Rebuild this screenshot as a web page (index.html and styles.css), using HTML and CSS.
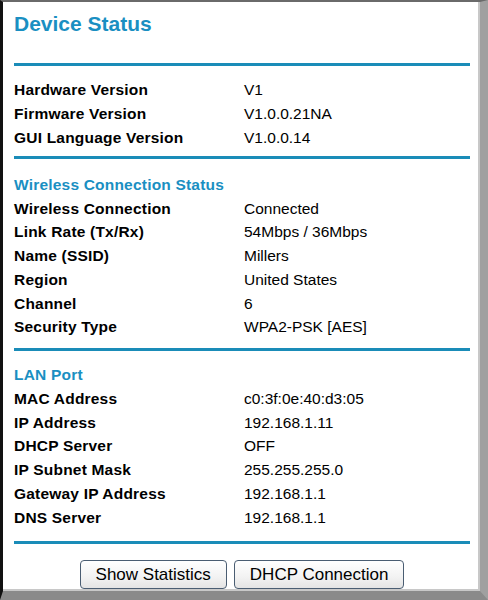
FILE: index.html
```html
<!DOCTYPE html>
<html>
<head>
<meta charset="utf-8">
<link rel="stylesheet" href="styles.css">
</head>
<body>
<div class="frame">
  <h1 class="title">Device Status</h1>
  <div class="rule rule-1"></div>
  <div class="section">
    <div class="row"><span class="label">Hardware Version</span><span class="value">V1</span></div>
    <div class="row"><span class="label">Firmware Version</span><span class="value">V1.0.0.21NA</span></div>
    <div class="row"><span class="label">GUI Language Version</span><span class="value">V1.0.0.14</span></div>
  </div>
  <div class="rule rule-2"></div>
  <div class="section">
    <div class="row heading">Wireless Connection Status</div>
    <div class="row"><span class="label">Wireless Connection</span><span class="value">Connected</span></div>
    <div class="row"><span class="label">Link Rate (Tx/Rx)</span><span class="value">54Mbps / 36Mbps</span></div>
    <div class="row"><span class="label">Name (SSID)</span><span class="value">Millers</span></div>
    <div class="row"><span class="label">Region</span><span class="value">United States</span></div>
    <div class="row"><span class="label">Channel</span><span class="value">6</span></div>
    <div class="row"><span class="label">Security Type</span><span class="value">WPA2-PSK [AES]</span></div>
  </div>
  <div class="rule rule-3"></div>
  <div class="section">
    <div class="row heading">LAN Port</div>
    <div class="row"><span class="label">MAC Address</span><span class="value">c0:3f:0e:40:d3:05</span></div>
    <div class="row"><span class="label">IP Address</span><span class="value">192.168.1.11</span></div>
    <div class="row"><span class="label">DHCP Server</span><span class="value">OFF</span></div>
    <div class="row"><span class="label">IP Subnet Mask</span><span class="value">255.255.255.0</span></div>
    <div class="row"><span class="label">Gateway IP Address</span><span class="value">192.168.1.1</span></div>
    <div class="row"><span class="label">DNS Server</span><span class="value">192.168.1.1</span></div>
  </div>
  <div class="rule rule-4"></div>
  <div class="buttons">
    <button class="btn" type="button">Show Statistics</button>
    <button class="btn" type="button">DHCP Connection</button>
  </div>
</div>
</body>
</html>
```
FILE: styles.css
```css
html, body {
  margin: 0;
  padding: 0;
  background: #fff;
}
.frame {
  width: 488px;
  height: 600px;
  box-sizing: border-box;
  border-left: 3px solid #111;
  border-top: 2px solid #6a6a6a;
  border-right: 8px solid #a0a0a0;
  border-bottom: 9px solid #8a8a8a;
  box-shadow: inset -2px 0 0 #c8c8c8, inset 0 -2px 0 #c8c8c8;
  padding: 10px 10px 0 11px;
  display: flex;
  flex-direction: column;
  font-family: "Liberation Sans", Arial, sans-serif;
  color: #000;
}
.title {
  margin: 0;
  font-size: 21px;
  line-height: 24px;
  font-weight: bold;
  color: #1a8fc2;
}
.rule {
  height: 3px;
  background: #1a8cb8;
  flex: none;
}
.rule-1 { margin: 26.5px 0 12.5px; }
.rule-2 { margin: 7px 0 13.5px; }
.rule-3 { margin: 8.5px 0 12.5px; }
.rule-4 { margin: 11.5px 0 16.5px; }
.section {
  display: flex;
  flex-direction: column;
}
.row {
  display: grid;
  grid-template-columns: 230px 1fr;
  height: 23.75px;
  line-height: 23.75px;
  font-size: 15.5px;
}
.label {
  font-weight: bold;
  letter-spacing: 0.2px;
}
.heading {
  display: block;
  font-weight: bold;
  letter-spacing: 0.2px;
  color: #1a8fc2;
}
.buttons {
  display: flex;
  justify-content: center;
  gap: 7px;
}
.btn {
  height: 29px;
  padding: 0 15px;
  font-family: "Liberation Sans", Arial, sans-serif;
  font-size: 17px;
  color: #000;
  background: linear-gradient(#ffffff, #f2f2f2 60%, #e4e4e4);
  border: 1px solid #4a5d72;
  border-radius: 4px;
}
```
